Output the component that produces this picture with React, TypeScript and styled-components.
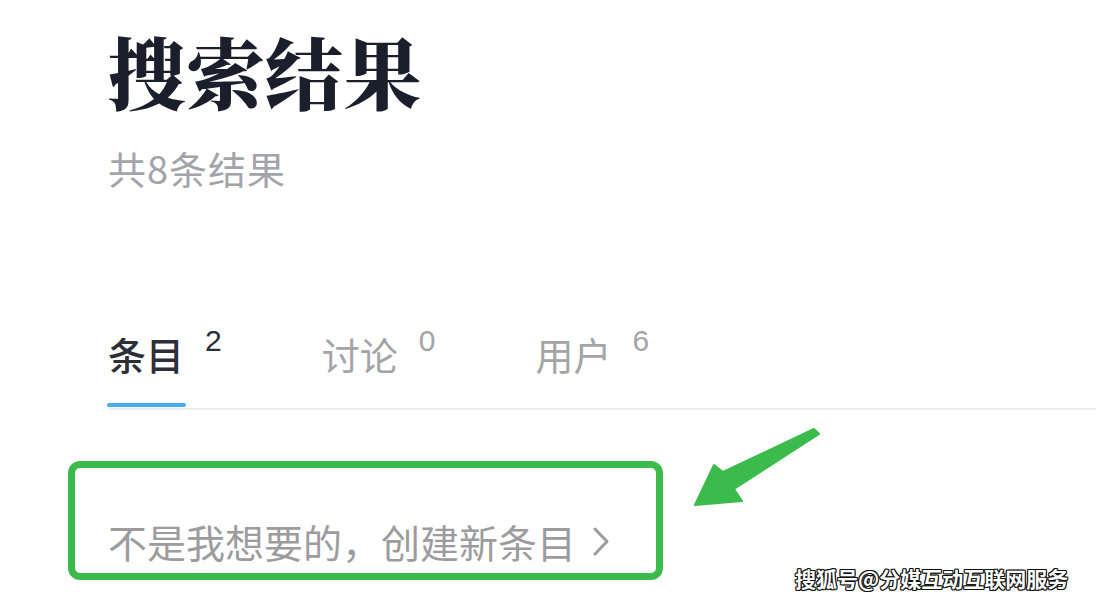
import React from "react";
import styled, { createGlobalStyle } from "styled-components";

const GlobalStyle = createGlobalStyle`
  html, body {
    margin: 0;
    padding: 0;
    background: #ffffff;
  }
  body {
    font-family: "Noto Sans CJK SC", "Noto Sans", sans-serif;
    width: 1096px;
    height: 604px;
    overflow: hidden;
  }
`;

const Page = styled.div`
  position: relative;
  width: 1096px;
  height: 604px;
  box-sizing: border-box;
  padding: 31px 0 0 108px;
  display: flex;
  flex-direction: column;
  align-items: flex-start;
`;

const Title = styled.h1`
  margin: 0;
  font-family: "Noto Serif CJK SC", "Noto Sans CJK SC", serif;
  font-size: 78px;
  line-height: 1;
  font-weight: 900;
  color: #1b1e2b;
  letter-spacing: 0.5px;
`;

const Subtitle = styled.div`
  margin-top: 40px;
  font-size: 38px;
  line-height: 1;
  letter-spacing: 1px;
  color: #a2a4aa;
`;

const TabBar = styled.div`
  margin-top: 148px;
  align-self: stretch;
  display: flex;
  gap: 100px;
  border-bottom: 2px solid #efefef;
`;

const Tab = styled.div<{ $active?: boolean }>`
  display: flex;
  align-items: flex-start;
  gap: 21px;
  padding-bottom: 35px;
  position: relative;
  color: ${(p) => (p.$active ? "#2c2f36" : "#a4a4a6")};
`;

const TabLabel = styled.span<{ $active?: boolean }>`
  position: relative;
  font-size: 38px;
  line-height: 1;
  font-weight: ${(p) => (p.$active ? 500 : 400)};
  &::after {
    content: "";
    display: ${(p) => (p.$active ? "block" : "none")};
    position: absolute;
    left: -1px;
    right: -2px;
    bottom: -34px;
    height: 4px;
    border-radius: 2px;
    background: #46acf4;
  }
`;

const TabCount = styled.span`
  font-family: "Liberation Sans", Arial, sans-serif;
  font-size: 30px;
  line-height: 1;
  margin-top: -9px;
`;

const CreateBox = styled.div`
  margin-top: 51px;
  margin-left: -40px;
  width: 595px;
  box-sizing: border-box;
  border: 7px solid #3bbb4c;
  border-radius: 12px;
  padding: 54px 0 12px 33px;
  display: flex;
  align-items: center;
  gap: 17px;
  color: #9c9c9e;
`;

const CreateText = styled.span`
  font-size: 39px;
  line-height: 1;
`;

const Chevron = styled.svg`
  width: 17px;
  height: 29px;
  flex: none;
`;

const Arrow = styled.svg`
  position: absolute;
  left: 690px;
  top: 425px;
  width: 135px;
  height: 85px;
`;

const Watermark = styled.div`
  position: absolute;
  left: 795px;
  top: 568px;
  font-size: 21px;
  line-height: 1;
  font-weight: 700;
  color: #ffffff;
  white-space: nowrap;
  text-shadow:
    1px 1px 0 #111, -1px -1px 0 #111, 1px -1px 0 #111, -1px 1px 0 #111,
    1px 0 0 #111, -1px 0 0 #111, 0 1px 0 #111, 0 -1px 0 #111;
`;

const tabs = [
  { label: "条目", count: 2, active: true },
  { label: "讨论", count: 0, active: false },
  { label: "用户", count: 6, active: false },
];

export default function App() {
  return (
    <>
      <GlobalStyle />
      <Page>
        <Title>搜索结果</Title>
        <Subtitle>共8条结果</Subtitle>
        <TabBar>
          {tabs.map((t) => (
            <Tab key={t.label} $active={t.active}>
              <TabLabel $active={t.active}>{t.label}</TabLabel>
              <TabCount>{t.count}</TabCount>
            </Tab>
          ))}
        </TabBar>
        <CreateBox>
          <CreateText>不是我想要的，创建新条目</CreateText>
          <Chevron viewBox="0 0 17 29">
            <polyline
              points="2,2 14,14.5 2,27"
              fill="none"
              stroke="#9c9c9e"
              strokeWidth="3"
              strokeLinecap="round"
              strokeLinejoin="round"
            />
          </Chevron>
        </CreateBox>
        <Arrow viewBox="690 425 135 85">
          <polygon
            points="814,429 819,434 734,489 742,501 695,505 714,465 723,472"
            fill="#3bbb4c"
            stroke="#3bbb4c"
            strokeWidth="2"
            strokeLinejoin="round"
          />
        </Arrow>
        <Watermark>搜狐号@分媒互动互联网服务</Watermark>
      </Page>
    </>
  );
}
